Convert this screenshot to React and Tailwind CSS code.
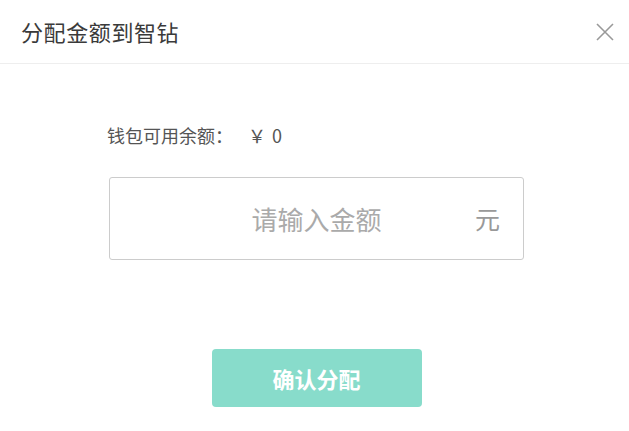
export default function App() {
  return (
    <div
      className="w-[629px] h-[431px] bg-white flex flex-col"
      style={{ fontFamily: '"Microsoft YaHei", "Noto Sans CJK SC", sans-serif' }}
    >
      {/* Header */}
      <div className="h-[64px] flex items-center justify-between pl-[21px] pr-[14px] border-b border-[#eeeeee]">
        <h1 className="text-[22px] text-[#3a3a3a] font-normal tracking-[0.6px]">分配金额到智钻</h1>
        <button className="w-[20px] h-[20px] flex items-center justify-center text-[#999999]">
          <svg width="18" height="18" viewBox="0 0 18 18" fill="none" stroke="currentColor" strokeWidth="1.6">
            <path d="M1 1L17 17M17 1L1 17" />
          </svg>
        </button>
      </div>

      {/* Body */}
      <div className="flex-1 flex flex-col items-center pl-[4px]">
        <div className="w-[415px] mt-[59px]">
          <p className="text-[18px] text-[#555555] leading-[24px] -ml-[2px]">
            钱包可用余额：<span className="ml-[15px]">￥</span>
            <span className="ml-[6px]">0</span>
          </p>
          <div className="mt-[30px] h-[83px] border border-[#cccccc] rounded-[3px] flex items-center relative">
            <input
              type="text"
              placeholder="请输入金额"
              className="w-full h-full text-center text-[26px] text-[#333333] placeholder-[#aaaaaa] outline-none bg-transparent"
            />
            <span className="absolute right-[23px] text-[25px] text-[#999999]">元</span>
          </div>
        </div>
        <button className="mt-[89px] w-[210px] h-[58px] rounded-[4px] bg-[#88dccb] text-white text-[22px] font-bold">
          确认分配
        </button>
      </div>
    </div>
  );
}
